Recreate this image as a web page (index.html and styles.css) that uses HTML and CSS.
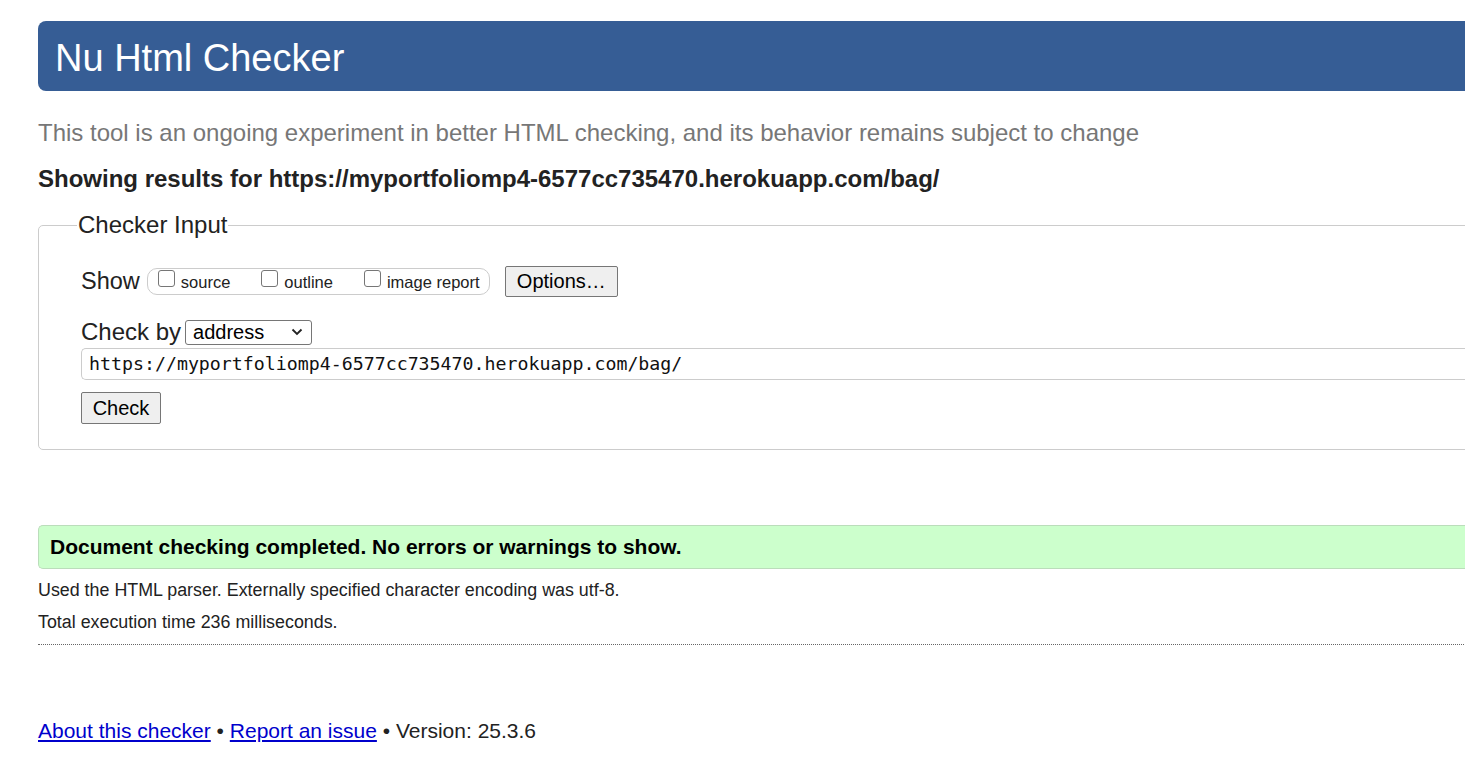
FILE: index.html
```html
<!DOCTYPE html>
<html lang="en">
<head>
<meta charset="utf-8">
<title>Nu Html Checker</title>
<link rel="stylesheet" href="styles.css">
</head>
<body>
<div class="page">
  <h1 class="banner">Nu Html Checker</h1>
  <p class="lede">This tool is an ongoing experiment in better HTML checking, and its behavior remains subject to change</p>
  <p class="results-for">Showing results for https://myportfoliomp4-6577cc735470.herokuapp.com/bag/</p>
  <fieldset class="checker">
    <legend class="checker-legend">Checker Input</legend>
    <div class="show-row">
      <span class="label">Show</span>
      <span class="pill">
        <label class="opt"><span class="box"></span>source</label>
        <label class="opt"><span class="box"></span>outline</label>
        <label class="opt"><span class="box"></span>image report</label>
      </span>
      <button class="btn options-btn">Options…</button>
    </div>
    <div class="checkby-row">
      <span class="label label-by">Check by</span>
      <span class="select">address<svg class="chev" width="12" height="8" viewBox="0 0 12 8"><path d="M1.5 1.5 L6 6 L10.5 1.5" fill="none" stroke="#222" stroke-width="1.8"/></svg></span>
    </div>
    <div class="url-field">https://myportfoliomp4-6577cc735470.herokuapp.com/bag/</div>
    <div class="check-row"><button class="btn check-btn">Check</button></div>
  </fieldset>
  <div class="success">Document checking completed. No errors or warnings to show.</div>
  <p class="details">Used the HTML parser. Externally specified character encoding was utf-8.</p>
  <p class="details">Total execution time 236 milliseconds.</p>
  <hr class="dotted">
  <p class="footer"><a href="#">About this checker</a> • <a href="#">Report an issue</a> • Version: 25.3.6</p>
</div>
</body>
</html>
```
FILE: styles.css
```css
html, body {
  margin: 0;
  padding: 0;
  background: #fff;
  overflow: hidden;
}
body {
  font-family: "Liberation Sans", Arial, sans-serif;
  color: #222;
}
.page {
  margin-left: 38px;
  width: 1500px;
  padding-top: 21px;
}
.banner {
  margin: 0;
  height: 70px;
  box-sizing: border-box;
  background: #365d95;
  color: #fff;
  border-radius: 8px 0 0 8px;
  font-weight: normal;
  font-size: 38px;
  line-height: 66px;
  padding: 4px 0 0 17px;
}
.lede {
  margin: 28px 0 0 0;
  font-size: 24px;
  line-height: 28px;
  color: #777;
}
.results-for {
  margin: 18px 0 0 0;
  font-size: 24px;
  line-height: 28px;
  font-weight: bold;
  color: #222;
}
.checker {
  margin: 18px 0 0 0;
  border: 1px solid #ccc;
  border-radius: 5px;
  padding: 0 0 25px 42px;
}
.checker-legend {
  font-size: 24px;
  line-height: 28px;
  padding: 0 1px;
  margin-left: -4px;
  color: #222;
}
.show-row {
  display: flex;
  align-items: center;
  margin-top: 26px;
  height: 32px;
}
.label {
  font-size: 23.5px;
}
.label-by {
  font-size: 24px;
}
.pill {
  display: inline-flex;
  align-items: center;
  margin-left: 7px;
  height: 27px;
  border: 1px solid #ccc;
  border-radius: 10px;
  padding: 0 0 0 10px;
  box-sizing: border-box;
  width: 343px;
}
.opt {
  display: inline-flex;
  align-items: center;
  font-size: 16.5px;
  margin-right: 31px;
  padding-top: 3px;
}
.opt:last-child { margin-right: 0; }
.box {
  display: inline-block;
  width: 17px;
  height: 17px;
  border: 1px solid #767676;
  border-radius: 3px;
  box-sizing: border-box;
  margin-right: 6px;
  position: relative;
  top: -4px;
}
.btn {
  font-family: "Liberation Sans", Arial, sans-serif;
  font-size: 20px;
  background: #efefef;
  border: 1px solid #767676;
  border-radius: 2px;
  color: #000;
  padding: 0;
}
.options-btn {
  margin-left: 15px;
  width: 113px;
  height: 31px;
}
.checkby-row {
  display: flex;
  align-items: center;
  margin-top: 21px;
  height: 28px;
}
.select {
  display: inline-flex;
  align-items: center;
  justify-content: space-between;
  margin-left: 4px;
  width: 127px;
  height: 25px;
  box-sizing: border-box;
  border: 1px solid #767676;
  border-radius: 3px;
  padding: 0 8px 0 7px;
  font-size: 20px;
  color: #000;
}
.url-field {
  margin-top: 2px;
  height: 32px;
  box-sizing: border-box;
  border: 1px solid #ccc;
  border-right: none;
  border-radius: 5px 0 0 5px;
  font-family: "DejaVu Sans Mono", "Liberation Mono", monospace;
  font-size: 18.25px;
  line-height: 30px;
  padding-left: 7px;
  color: #111;
}
.check-row {
  margin-top: 12px;
}
.check-btn {
  width: 80px;
  height: 32px;
}
.success {
  margin-top: 75px;
  height: 44px;
  box-sizing: border-box;
  background: #ccffcc;
  border: 1px solid #bbddbb;
  border-right: none;
  border-radius: 5px 0 0 5px;
  font-weight: bold;
  font-size: 21px;
  line-height: 42px;
  padding-left: 11px;
  color: #000;
}
.details {
  margin: 0;
  font-size: 17.85px;
  line-height: 21px;
  margin-top: 11px;
  color: #222;
}
.dotted {
  margin: 11px 0 0 0;
  border: none;
  border-top: 1px dotted #666;
  height: 0;
}
.footer {
  margin: 74px 0 0 0;
  font-size: 21px;
  line-height: 24px;
  color: #222;
}
.footer a {
  color: #00c;
}
```
